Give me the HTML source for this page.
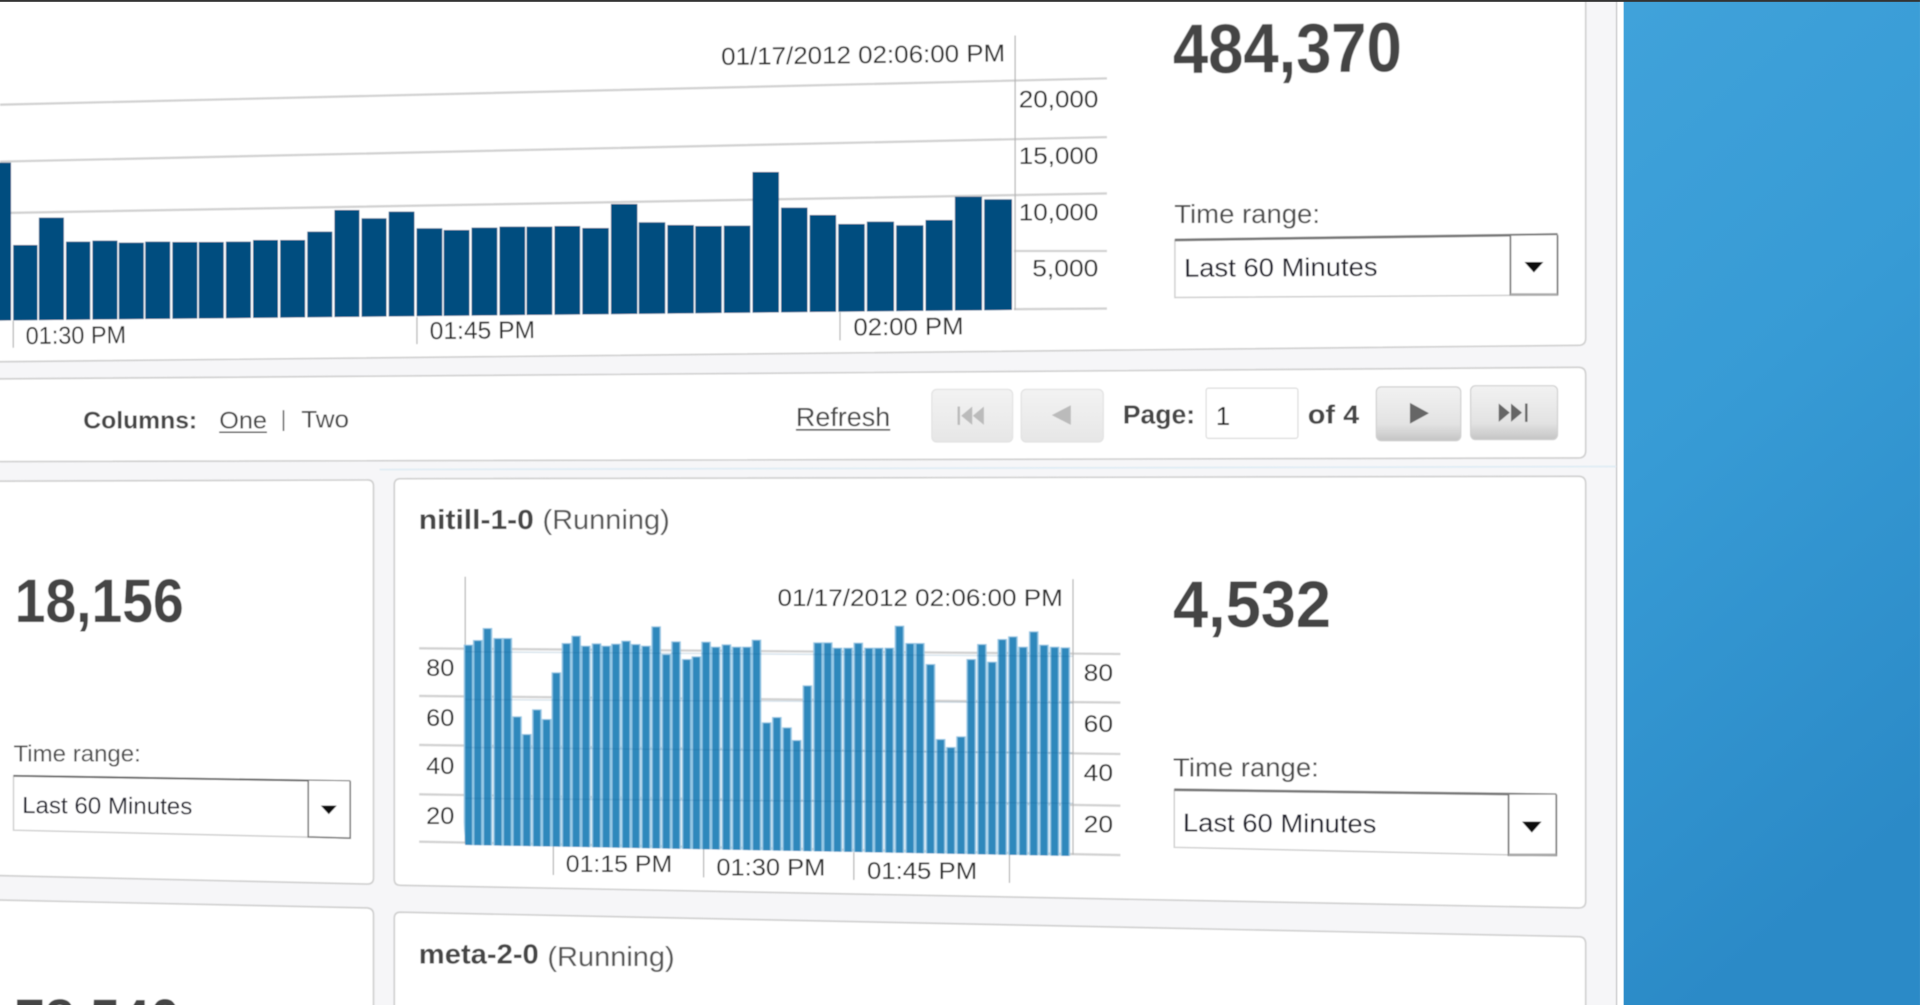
<!DOCTYPE html>
<html lang="en">
<head>
<meta charset="utf-8">
<title>Server dashboard</title>
<style>
html,body{margin:0;padding:0;width:1920px;height:1005px;overflow:hidden;background:#f6f6f8}
svg{display:block}
text{font-family:"Liberation Sans",sans-serif;fill:#2c2c2c;font-size:20px;stroke:currentColor;stroke-width:0}
.b{font-weight:bold}
.big{font-weight:bold;fill:#444}
.lab{fill:#4c4c4c}
.sel{fill:#1c1c2a}
.g{stroke:#d2d2d2;stroke-width:1.9;fill:none}
.ax{stroke:#b4b4b4;stroke-width:1;fill:none}
.pan{fill:#fff;stroke:#cfcfcf;stroke-width:1.3}
</style>
</head>
<body>
<svg xmlns="http://www.w3.org/2000/svg" width="1920" height="1005" viewBox="0 0 1568 820.78">
<defs>
<linearGradient id="blue" x1="0" y1="0" x2="0.25" y2="1">
<stop offset="0" stop-color="#40a2da"/><stop offset=".45" stop-color="#379bd5"/><stop offset="1" stop-color="#2b8ac7"/>
</linearGradient>
<linearGradient id="dis" x1="0" y1="0" x2="0" y2="1"><stop offset="0" stop-color="#f3f3f3"/><stop offset="1" stop-color="#e6e6e6"/></linearGradient>
<linearGradient id="en" x1="0" y1="0" x2="0" y2="1"><stop offset="0" stop-color="#f2f2f2"/><stop offset=".7" stop-color="#e2e2e2"/><stop offset="1" stop-color="#c4c4c4"/></linearGradient>
<clipPath id="c1"><polygon points="-50,0 1380,0 1380,930 -50,963"/></clipPath>
<clipPath id="c2"><polygon points="100,0 1405,0 1405,1128 155,1095"/></clipPath>
<filter id="soft" x="0" y="0" width="100%" height="100%"><feGaussianBlur stdDeviation="0.5"/></filter>
</defs>

<rect width="1568" height="821" fill="#f6f6f8"/>
<rect x="1319.5" y="0" width="1.4" height="821" fill="#d4d4d6"/>
<rect x="1321" y="0" width="5" height="821" fill="#fff"/>
<rect x="1326" y="0" width="242" height="821" fill="url(#blue)"/>

<g filter="url(#soft)">
<!-- panels -->
<path class="pan" d="M-5 295.5L1289 282Q1295 282 1295 276V-5H-5Z"/>
<path class="pan" d="M-5 309.5L1289 300Q1295 300 1295 306V368Q1295 374 1289 374L-5 377Z"/>
<path d="M310 383.5L1320 381" stroke="#dfecf4" stroke-width="1.4" fill="none"/>
<path class="pan" d="M-5 393L300 392Q305 392 305 397V717Q305 722 300 722L-5 715Z"/>
<path class="pan" d="M-5 735L300 741.5Q305 742 305 747V830H-5Z"/>
<path class="pan" d="M327 391L1289 389Q1295 389 1295 395V736Q1295 741.5 1289 741.5L327 723Q322 723 322 718V396Q322 391 327 391Z"/>
<path class="pan" d="M327 745L1289 765Q1295 765 1295 771V830H322V750Q322 745 327 745Z"/>

<!-- chart 1 grid -->
<path class="g" d="M0 85.5L904 64M0 132L904 112M0 174L904 158M828 205L904 205M828 252.5L904 252"/>
<path class="ax" d="M829 29V253M10.8 262V284M340.5 259V281M686 255V278"/>
<!-- chart 1 bars -->
<g transform="scale(.59895 .27222)" clip-path="url(#c1)" fill="#024d7f">
<rect x="-20" y="488" width="35" height="600"/>
<rect x="18" y="735" width="33" height="400"/><rect x="53" y="653" width="34" height="400"/><rect x="90" y="725" width="33" height="400"/><rect x="126" y="722" width="34" height="400"/><rect x="162" y="728" width="34" height="400"/><rect x="198" y="725" width="34" height="400"/><rect x="235" y="726" width="34" height="400"/><rect x="271" y="726" width="34" height="400"/><rect x="308" y="725" width="34" height="400"/><rect x="345" y="720" width="34" height="400"/><rect x="382" y="720" width="34" height="400"/><rect x="419" y="695" width="34" height="400"/><rect x="456" y="630" width="34" height="400"/><rect x="493" y="655" width="34" height="400"/><rect x="530" y="635" width="35" height="400"/><rect x="568" y="685" width="35" height="400"/><rect x="605" y="690" width="35" height="400"/><rect x="643" y="683" width="35" height="400"/><rect x="681" y="680" width="35" height="400"/><rect x="718" y="680" width="35" height="400"/><rect x="756" y="678" width="35" height="400"/><rect x="794" y="684" width="36" height="400"/><rect x="833" y="612" width="36" height="400"/><rect x="871" y="667" width="36" height="400"/><rect x="910" y="675" width="36" height="400"/><rect x="948" y="678" width="36" height="400"/><rect x="987" y="677" width="36" height="400"/><rect x="1026" y="516" width="36" height="500"/><rect x="1065" y="623" width="36" height="400"/><rect x="1104" y="645" width="36" height="400"/><rect x="1143" y="672" width="36" height="400"/><rect x="1182" y="665" width="37" height="400"/><rect x="1222" y="676" width="37" height="400"/><rect x="1262" y="660" width="37" height="400"/><rect x="1302" y="590" width="37" height="400"/><rect x="1342" y="598" width="38" height="400"/>
</g>
<text x="589" y="53" textLength="232" lengthAdjust="spacingAndGlyphs" transform="rotate(-.7 589 53)">01/17/2012 02:06:00 PM</text>
<text x="832" y="88" textLength="65" lengthAdjust="spacingAndGlyphs">20,000</text>
<text x="832" y="134" textLength="65" lengthAdjust="spacingAndGlyphs">15,000</text>
<text x="832" y="180" textLength="65" lengthAdjust="spacingAndGlyphs">10,000</text>
<text x="843" y="226" textLength="54" lengthAdjust="spacingAndGlyphs">5,000</text>
<text x="21" y="281" textLength="82" lengthAdjust="spacingAndGlyphs" transform="rotate(-.6 21 281)">01:30 PM</text>
<text x="351" y="277" textLength="86" lengthAdjust="spacingAndGlyphs" transform="rotate(-.6 351 277)">01:45 PM</text>
<text x="697" y="274" textLength="90" lengthAdjust="spacingAndGlyphs" transform="rotate(-.6 697 274)">02:00 PM</text>

<text class="big" x="958" y="60" style="font-size:57px" textLength="187" lengthAdjust="spacingAndGlyphs" transform="rotate(-.5 958 60)">484,370</text>
<text class="lab" x="959" y="182" style="font-size:21px" textLength="119" lengthAdjust="spacingAndGlyphs">Time range:</text>
<!-- select 1 -->
<path d="M959.5 196L1272 191.5V241L959.5 243Z" fill="#fff" stroke="#cfcfcf" stroke-width="1.2"/>
<path d="M959.5 196L1272 191.5" stroke="#777" stroke-width="2.2" fill="none"/>
<path d="M1233.5 192.5V240.5H1272V192" fill="#fff" stroke="#777" stroke-width="1.4"/>
<path d="M1233.5 240.5H1272" stroke="#aaa" stroke-width="2"/>
<polygon points="1245,214 1260.5,214 1252.7,222.5" fill="#111"/>
<text class="sel" x="967" y="226" style="font-size:21px" textLength="158" lengthAdjust="spacingAndGlyphs" transform="rotate(-.3 967 226)">Last 60 Minutes</text>

<!-- toolbar -->
<text class="b" x="68" y="350" style="font-size:20px;fill:#444" textLength="93" lengthAdjust="spacingAndGlyphs">Columns:</text>
<text x="179" y="350" style="font-size:20px;fill:#444" textLength="39" lengthAdjust="spacingAndGlyphs">One</text>
<path d="M179 353H218" stroke="#444" stroke-width="1.2"/>
<path d="M231.5 335V352" stroke="#555" stroke-width="1.2"/>
<text x="246" y="349" style="font-size:20px;fill:#444" textLength="39" lengthAdjust="spacingAndGlyphs">Two</text>
<text x="650" y="348" style="font-size:21px;fill:#444" textLength="77" lengthAdjust="spacingAndGlyphs">Refresh</text>
<path d="M650 351H727" stroke="#444" stroke-width="1.3"/>
<rect x="761" y="318" width="66" height="43" rx="4" fill="url(#dis)" stroke="#e2e2e2"/>
<rect x="834" y="318" width="67" height="43" rx="4" fill="url(#dis)" stroke="#e2e2e2"/>
<path d="M782 332h2v15h-2zM794 332v15l-9-7.5zM803.5 332v15l-9-7.5z" fill="#bbb"/>
<path d="M874.5 331v16l-15.5-8z" fill="#bbb"/>
<text class="b" x="917" y="346" style="font-size:21px;fill:#444" textLength="59" lengthAdjust="spacingAndGlyphs">Page:</text>
<rect x="985" y="317" width="75" height="41" rx="2" fill="#fff" stroke="#ddd"/>
<text x="993" y="347" style="font-size:21px;fill:#222">1</text>
<text class="b" x="1068" y="346" style="font-size:21px;fill:#444" textLength="42" lengthAdjust="spacingAndGlyphs">of 4</text>
<rect x="1124" y="316" width="69" height="44" rx="4" fill="url(#en)" stroke="#d0d0d0"/>
<rect x="1201" y="315" width="71" height="44" rx="4" fill="url(#en)" stroke="#d0d0d0"/>
<path d="M1151.5 329v17l15.5-8.5z" fill="#666"/>
<path d="M1224 329.5v15l9-7.5zM1234 329.5v15l9-7.5zM1245.5 329.5h2v15h-2z" fill="#666"/>

<!-- left column panel -->
<text class="big" x="12" y="508" style="font-size:50px" textLength="138" lengthAdjust="spacingAndGlyphs">18,156</text>
<text class="lab" x="11" y="622" style="font-size:19px" textLength="104" lengthAdjust="spacingAndGlyphs">Time range:</text>
<path d="M11 633.6L286 638V684.5L11 678Z" fill="#fff" stroke="#cfcfcf" stroke-width="1.2"/>
<path d="M11 633.6L286 638" stroke="#666" stroke-width="1.6"/>
<path d="M251.7 637.5V683.5L286 684.5V638" fill="#fff" stroke="#777" stroke-width="1.3"/>
<polygon points="262,658 275,658 268.5,665" fill="#111"/>
<text class="sel" x="18" y="664" style="font-size:19px" textLength="139" lengthAdjust="spacingAndGlyphs" transform="rotate(.4 18 664)">Last 60 Minutes</text>
<text class="big" x="12" y="851" style="font-size:50px" textLength="135" lengthAdjust="spacingAndGlyphs">78,540</text>

<!-- chart 2 -->
<text class="b" x="342" y="432" style="font-size:23px;fill:#444" textLength="94" lengthAdjust="spacingAndGlyphs">nitill-1-0</text>
<text x="443" y="432" style="font-size:23px;fill:#555" textLength="104" lengthAdjust="spacingAndGlyphs">(Running)</text>
<path class="g" d="M342.3 529.5L915 534.1M342.3 568.4L915 573.8M342.3 608.4L915 615.8M342.3 648.7L915 658M342.3 687.4L915 698.3"/>
<path class="ax" d="M379.9 471V689M876.3 473V698M451.9 691.4V714.6M574.6 693V716.5M697.3 696V718.7M824.4 698V721"/>
<g transform="translate(318.5 392) scale(.39588 .27222)" clip-path="url(#c2)" fill="#2f88bc" stroke="#92c6e4" stroke-width="6" style="paint-order:stroke">
<rect x="155" y="497" width="14" height="700"/><rect x="174" y="483" width="14" height="700"/><rect x="194" y="447" width="14" height="700"/><rect x="216" y="477" width="14" height="700"/><rect x="235" y="477" width="14" height="700"/><rect x="255" y="712" width="14" height="500"/><rect x="275" y="765" width="14" height="500"/><rect x="296" y="691" width="14" height="500"/><rect x="316" y="720" width="14" height="500"/><rect x="336" y="580" width="14" height="600"/><rect x="357" y="492" width="14" height="700"/><rect x="377" y="470" width="14" height="700"/><rect x="397" y="500" width="14" height="700"/><rect x="419" y="493" width="14" height="700"/><rect x="439" y="500" width="14" height="700"/><rect x="459" y="494" width="14" height="700"/><rect x="480" y="485" width="14" height="700"/><rect x="500" y="495" width="14" height="700"/><rect x="521" y="500" width="14" height="700"/><rect x="542" y="442" width="14" height="700"/><rect x="563" y="525" width="14" height="700"/><rect x="583" y="487" width="14" height="700"/><rect x="605" y="540" width="14" height="700"/><rect x="625" y="532" width="14" height="700"/><rect x="645" y="488" width="14" height="700"/><rect x="665" y="503" width="14" height="700"/><rect x="687" y="496" width="14" height="700"/><rect x="708" y="503" width="14" height="700"/><rect x="729" y="503" width="14" height="700"/><rect x="749" y="482" width="14" height="700"/><rect x="770" y="730" width="14" height="500"/><rect x="791" y="714" width="14" height="500"/><rect x="812" y="745" width="14" height="500"/><rect x="832" y="783" width="14" height="500"/><rect x="854" y="619" width="14" height="600"/><rect x="876" y="490" width="14" height="700"/><rect x="896" y="490" width="14" height="700"/><rect x="916" y="506" width="14" height="700"/><rect x="938" y="506" width="14" height="700"/><rect x="959" y="491" width="14" height="700"/><rect x="981" y="506" width="14" height="700"/><rect x="1001" y="506" width="14" height="700"/><rect x="1023" y="506" width="14" height="700"/><rect x="1044" y="440" width="14" height="700"/><rect x="1066" y="492" width="14" height="700"/><rect x="1086" y="492" width="14" height="700"/><rect x="1108" y="555" width="14" height="700"/><rect x="1129" y="780" width="14" height="500"/><rect x="1150" y="804" width="14" height="500"/><rect x="1171" y="772" width="14" height="500"/><rect x="1192" y="540" width="14" height="700"/><rect x="1214" y="495" width="14" height="700"/><rect x="1235" y="548" width="14" height="700"/><rect x="1256" y="480" width="14" height="700"/><rect x="1278" y="472" width="14" height="700"/><rect x="1299" y="503" width="14" height="700"/><rect x="1321" y="457" width="14" height="700"/><rect x="1342" y="497" width="14" height="700"/><rect x="1364" y="503" width="14" height="700"/><rect x="1386" y="505" width="14" height="700"/>
</g>
<path d="M380 532.3L876 536M380 571.3L876 574M380 610.5L876 615M380 652L876 656" stroke="#0a5a8c" stroke-opacity=".16" stroke-width="1.2" fill="none"/>
<text x="635" y="495" textLength="233" lengthAdjust="spacingAndGlyphs">01/17/2012 02:06:00 PM</text>
<text x="348" y="552" textLength="23" lengthAdjust="spacingAndGlyphs">80</text>
<text x="348" y="593" textLength="23" lengthAdjust="spacingAndGlyphs">60</text>
<text x="348" y="632" textLength="23" lengthAdjust="spacingAndGlyphs">40</text>
<text x="348" y="673" textLength="23" lengthAdjust="spacingAndGlyphs">20</text>
<text x="885" y="556" textLength="24" lengthAdjust="spacingAndGlyphs">80</text>
<text x="885" y="598" textLength="24" lengthAdjust="spacingAndGlyphs">60</text>
<text x="885" y="638" textLength="24" lengthAdjust="spacingAndGlyphs">40</text>
<text x="885" y="680" textLength="24" lengthAdjust="spacingAndGlyphs">20</text>
<text x="462" y="712" textLength="87" lengthAdjust="spacingAndGlyphs">01:15 PM</text>
<text x="585" y="715" textLength="89" lengthAdjust="spacingAndGlyphs">01:30 PM</text>
<text x="708" y="718" textLength="90" lengthAdjust="spacingAndGlyphs">01:45 PM</text>

<text class="big" x="958" y="512" style="font-size:54px" textLength="129" lengthAdjust="spacingAndGlyphs">4,532</text>
<text class="lab" x="958" y="634" style="font-size:21px" textLength="119" lengthAdjust="spacingAndGlyphs">Time range:</text>
<!-- select 3 -->
<path d="M959 645L1271 649V699L959 692Z" fill="#fff" stroke="#cfcfcf" stroke-width="1.2"/>
<path d="M959 645L1271 649" stroke="#777" stroke-width="2.2" fill="none"/>
<path d="M1232 649V698.5H1271V649" fill="#fff" stroke="#777" stroke-width="1.4"/>
<path d="M1232 698H1271" stroke="#aaa" stroke-width="2"/>
<polygon points="1243,671 1259,671 1251,680" fill="#111"/>
<text class="sel" x="966" y="679" style="font-size:21px" textLength="158" lengthAdjust="spacingAndGlyphs" transform="rotate(.4 966 679)">Last 60 Minutes</text>

<text class="b" x="342" y="787" style="font-size:23px;fill:#444" textLength="98" lengthAdjust="spacingAndGlyphs">meta-2-0</text>
<text x="447" y="789" style="font-size:23px;fill:#555" textLength="104" lengthAdjust="spacingAndGlyphs">(Running)</text>
</g>

<rect x="0" y="0" width="1568" height="1.5" fill="#333"/>
</svg>
</body>
</html>
